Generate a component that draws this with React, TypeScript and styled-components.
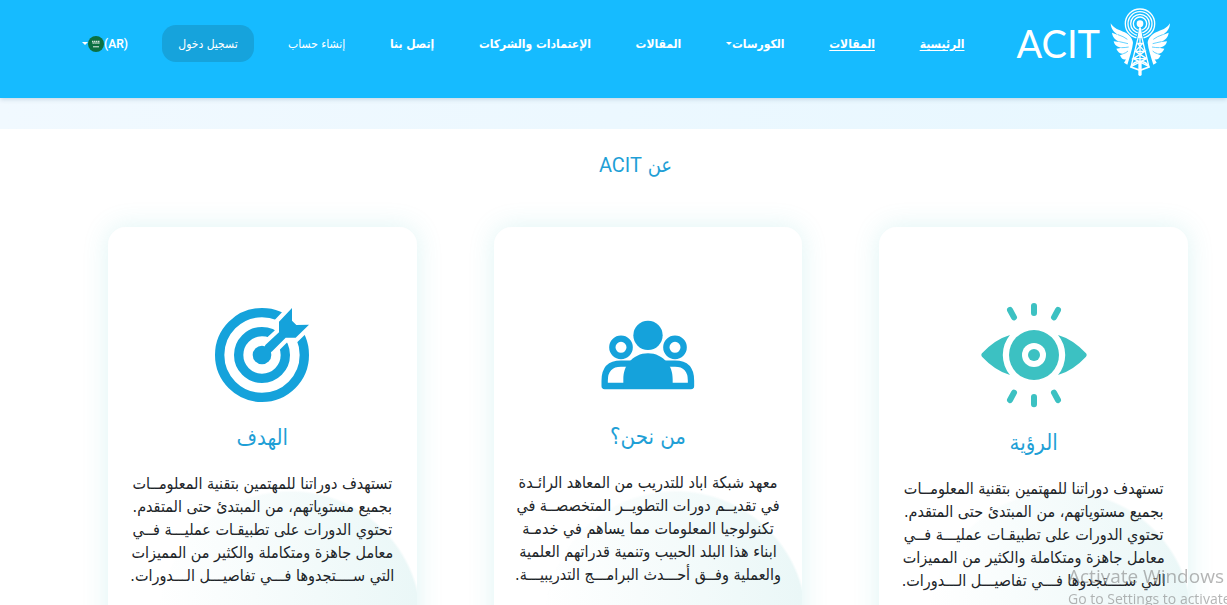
import React from "react";
import styled, { createGlobalStyle } from "styled-components";

const arabic = `"DejaVu Sans Condensed", "DejaVu Sans", "Open Sans", sans-serif`;

const GlobalStyle = createGlobalStyle`
  * { box-sizing: border-box; }
  html, body { margin: 0; background: #fff; overflow: hidden; }
  body { font-family: ${arabic}; color: #212529; }
`;

const Page = styled.div`
  min-height: 100vh;
`;

const Header = styled.header`
  display: flex;
  align-items: flex-start;
  gap: 52px;
  height: 98px;
  padding: 0 56px 0 82px;
  background: #16bbff;
  box-shadow: 0 1px 5px rgba(0, 60, 100, 0.2);
  position: relative;
`;

const Brand = styled.a`
  display: flex;
  align-items: center;
  gap: 10px;
  height: 86px;
  color: #fff;
  text-decoration: none;
`;

const BrandName = styled.span`
  font-family: "Lato", sans-serif;
  font-size: 38px;
  font-weight: 400;
  line-height: 44px;
`;

const Nav = styled.nav`
  flex: 1;
  display: flex;
  align-items: center;
  justify-content: space-between;
  height: 87px;
`;

const NavLink = styled.a<{ $active?: boolean; $light?: boolean }>`
  color: #fff;
  font-size: 12px;
  line-height: 20px;
  font-weight: ${(p) => (p.$light ? 400 : 600)};
  white-space: nowrap;
  text-decoration: ${(p) => (p.$active ? "underline" : "none")};
  text-underline-offset: 2px;
`;

const MenuButton = styled.button`
  display: flex;
  align-items: center;
  padding: 0;
  border: 0;
  background: none;
  color: #fff;
  font: 600 12px/20px ${arabic};
  white-space: nowrap;
`;

const Caret = styled.span`
  border: 3px solid transparent;
  border-top-color: #fff;
  border-bottom: 0;
`;

const LangCode = styled.span`
  direction: ltr;
  font: 600 12px/20px Roboto, sans-serif;
`;

const AccountGroup = styled.div`
  display: flex;
  align-items: center;
  gap: 34px;
`;

const LoginButton = styled.button`
  width: 92px;
  height: 37px;
  padding: 0;
  border: 0;
  border-radius: 14px;
  background: #16a3dc;
  color: #fff;
  font: 400 12px/20px ${arabic};
  white-space: nowrap;
`;

const Strip = styled.div`
  height: 31px;
  background: linear-gradient(90deg, #f1f9ff, #e7f7ff);
`;

const SectionTitle = styled.h2`
  margin: 0;
  padding: 20px 0 0 44px;
  color: #1f9fd6;
  font: 400 20px/32px ${arabic};
  text-align: center;
`;

const Latin = styled.span`
  font-family: Roboto, sans-serif;
`;

const Cards = styled.section`
  display: grid;
  grid-template-columns: repeat(3, 1fr);
  gap: 77px;
  padding: 46px 39px 0 108px;
`;

const Card = styled.article`
  display: flex;
  flex-direction: column;
  align-items: center;
  padding: 64px 0 70px;
  border-radius: 18px;
  background: radial-gradient(circle 132px at 59% 395px, rgba(255, 255, 255, 0) 98%, #fff 100%),
    linear-gradient(90deg, #fff 15%, #eaf7f7 100%);
  box-shadow: 0 0 26px rgba(60, 190, 190, 0.17);
`;

const IconBox = styled.div<{ $height: number; $gap: number }>`
  display: flex;
  align-items: center;
  justify-content: center;
  height: ${(p) => p.$height}px;
  padding-bottom: ${(p) => p.$gap}px;
`;

const CardTitle = styled.h3`
  margin: 0;
  color: #1f9fd6;
  font: 500 22px/30px ${arabic};
`;

const CardText = styled.p`
  margin: 19px 0 0;
  font-size: 16px;
  line-height: 23px;
  text-align: center;
  white-space: pre;
`;

const Watermark = styled.div`
  position: fixed;
  right: 0;
  bottom: -4px;
  width: 159px;
  overflow: hidden;
  direction: ltr;
  color: rgba(120, 120, 120, 0.55);
  white-space: nowrap;
  font: 400 14px/20px "Open Sans", sans-serif;
  pointer-events: none;
`;

const WatermarkTitle = styled.div`
  font-size: 19px;
  line-height: 26px;
`;

const LogoWing = () => (
  <g>
    <path
      d="M36 72C45 88 62 92 78 99C94 107 101 118 103 130C101 150 93 172 86 196L76 190L82 180C74 182 68 178 64 168L76 163C64 164 57 158 53 148L70 145C56 144 48 138 45 126L64 128C50 122 42 114 40 100L60 108C44 98 37 88 36 72Z"
      fill="#fff"
    />
    <path
      d="M58 106Q74 111 86 120M62 127Q76 130 88 133M68 145Q80 145 90 143M74 163Q82 161 88 155"
      stroke="#16bbff"
      strokeWidth="2"
      fill="none"
    />
  </g>
);

const LogoMark = () => (
  <svg width="61" height="70" viewBox="34 26 183 210" aria-hidden="true">
    <g fill="none" stroke="#fff" strokeWidth="4">
      <circle cx="124" cy="73" r="20" />
      <circle cx="124" cy="73" r="28" />
      <circle cx="124" cy="73" r="36" />
      <circle cx="124" cy="73" r="44" />
    </g>
    <circle cx="124" cy="73" r="10" fill="#fff" />
    <path d="M124 90L97 196H151Z" fill="#16bbff" stroke="#16bbff" strokeWidth="8" />
    <LogoWing />
    <g transform="translate(250 0) scale(-1 1)">
      <LogoWing />
    </g>
    <path d="M121 84H127L131 116H117Z" fill="#fff" />
    <g fill="none" stroke="#fff" strokeWidth="4">
      <path d="M122 100L97 203M126 100L151 203M124 105V190" />
      <path d="M116 132H132L110 156H138L104 178H144L98 201M116 132L138 156M110 156L144 178M104 178L150 201" />
      <path d="M97 203Q105 186 124 186Q143 186 151 203L124 213Z" strokeWidth="5" />
    </g>
    <path d="M124 192V225" stroke="#fff" strokeWidth="10" strokeLinecap="round" />
  </svg>
);

const Flag = () => (
  <svg width="16" height="16" viewBox="0 0 16 16" aria-hidden="true">
    <circle cx="8" cy="8" r="8" fill="#0b7040" />
    <path d="M4 5.5h8M4.500 7.200h7" stroke="#fff" strokeWidth="1.300" strokeDasharray="1.400 .5" opacity=".8" />
    <path d="M5 10.800h6" stroke="#fff" strokeWidth=".9" />
  </svg>
);

const EyeIcon = () => (
  <svg width="106" height="106" viewBox="363 276 318 318" fill="#3cc1c2" aria-hidden="true">
    <path d="M450 375Q405 388 366 430Q362 435 366 440Q405 482 450 495A94 94 0 0 1 450 375Z" />
    <path d="M594 375Q639 388 678 430Q682 435 678 440Q639 482 594 495A94 94 0 0 0 594 375Z" />
    <circle cx="522" cy="435" r="75" />
    <circle cx="522" cy="435" r="36" fill="#fff" />
    <circle cx="522" cy="435" r="18" />
    <path
      d="M522 288V309M450 300L462 322M594 300L582 322M522 561V583M462 548L450 570M582 548L594 570"
      stroke="#3cc1c2"
      strokeWidth="18"
      strokeLinecap="round"
    />
  </svg>
);

const PeopleIcon = () => (
  <svg width="94" height="70" viewBox="362 330 282 210" fill="#15a2db" aria-hidden="true">
    <circle cx="503" cy="376" r="44" />
    <g fill="#fff" stroke="#15a2db" strokeWidth="19">
      <circle cx="422" cy="412" r="26" />
      <circle cx="584" cy="412" r="26" />
      <path d="M373 528V512Q373 461 422 461H584Q632 461 632 512V528Z" strokeLinejoin="round" />
    </g>
    <path d="M429 537V508C429 485 436 468 445 458C460 440 480 430 503 430S546 440 561 458C570 468 577 485 577 508V537Z" />
  </svg>
);

const arrow = "M526 405L567 367V335L606 294V332L619 345L657 344L617 383H587L545 425L516 435Z";

const TargetIcon = () => (
  <svg width="96" height="96" viewBox="372 291 288 288" aria-hidden="true">
    <g fill="none" stroke="#15a2db" strokeWidth="28">
      <circle cx="516" cy="435" r="127" />
      <circle cx="516" cy="435" r="70" />
    </g>
    <path d={arrow} fill="#fff" stroke="#fff" strokeWidth="26" />
    <path d={arrow} fill="#15a2db" />
    <circle cx="516" cy="435" r="28" fill="#15a2db" />
  </svg>
);

const goalText = [
  "تستهدف دوراتنا للمهتمين بتقنية المعلومــات",
  "بجميع مستوياتهم، من المبتدئ حتى المتقدم.",
  "تحتوي الدورات على تطبيقـات عمليـــة فــي",
  "معامل جاهزة ومتكاملة والكثير من المميزات",
  "التي ســــتجدوها فـــي تفاصيـــل الـــدورات.",
];

const aboutText = [
  "معهد شبكة اباد للتدريب من المعاهد الرائـدة",
  "في تقديــم دورات التطويــر المتخصصــة في",
  "تكنولوجيا المعلومات مما يساهم في خدمـة",
  "ابناء هذا البلد الحبيب وتنمية قدراتهم العلمية",
  "والعملية وفــق أحـــدث البرامـــج التدريبيـــة.",
];

const cards = [
  { title: "الرؤية", lines: goalText, icon: <EyeIcon />, height: 137, gap: 10 },
  { title: "من نحن؟", lines: aboutText, icon: <PeopleIcon />, height: 131, gap: 4 },
  { title: "الهدف", lines: goalText, icon: <TargetIcon />, height: 132, gap: 4 },
];

export default function App() {
  return (
    <Page dir="rtl" lang="ar">
      <GlobalStyle />
      <Header>
        <Brand href="#">
          <LogoMark />
          <BrandName dir="ltr" lang="en">ACIT</BrandName>
        </Brand>
        <Nav>
          <NavLink href="#" $active>الرئيسية</NavLink>
          <NavLink href="#" $active>المقالات</NavLink>
          <MenuButton type="button">
            الكورسات
            <Caret />
          </MenuButton>
          <NavLink href="#">المقالات</NavLink>
          <NavLink href="#">الإعتمادات والشركات</NavLink>
          <NavLink href="#">إتصل بنا</NavLink>
          <AccountGroup>
            <NavLink href="#" $light>إنشاء حساب</NavLink>
            <LoginButton type="button">تسجيل دخول</LoginButton>
            <MenuButton type="button">
              <LangCode>(AR)</LangCode>
              <Flag />
              <Caret />
            </MenuButton>
          </AccountGroup>
        </Nav>
      </Header>
      <Strip />
      <main>
        <SectionTitle>
          عن <Latin>ACIT</Latin>
        </SectionTitle>
        <Cards>
          {cards.map((card) => (
            <Card key={card.title}>
              <IconBox $height={card.height} $gap={card.gap}>{card.icon}</IconBox>
              <CardTitle>{card.title}</CardTitle>
              <CardText>{card.lines.join("\n")}</CardText>
            </Card>
          ))}
        </Cards>
      </main>
      <Watermark>
        <WatermarkTitle>Activate Windows</WatermarkTitle>
        Go to Settings to activate Windows.
      </Watermark>
    </Page>
  );
}
